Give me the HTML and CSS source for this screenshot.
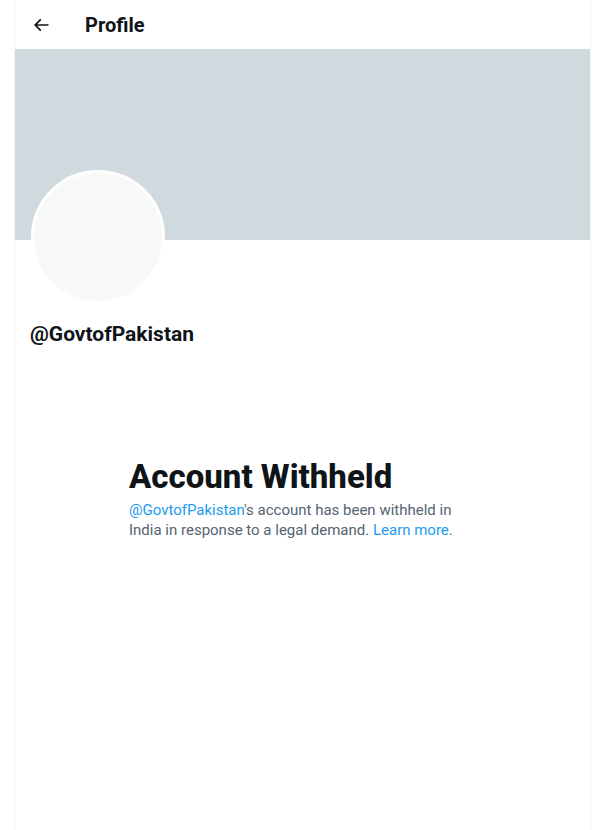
FILE: index.html
```html
<!DOCTYPE html>
<html>
<head>
    <title>Profile</title>
    <link rel="stylesheet" href="styles.css">
</head>
<body>
    <div class="column">
        <div class="topbar">
            <div class="back">
                <svg viewBox="0 0 24 24" width="20" height="20"><path d="M7.414 13l5.043 5.04-1.414 1.42L3.586 12l7.457-7.46 1.414 1.42L7.414 11H21v2H7.414z"></path></svg>
            </div>
            <h2>Profile</h2>
        </div>
        <div class="banner"></div>
        <div class="profile-head">
            <div class="avatar"></div>
        </div>
        <div class="handle">@GovtofPakistan</div>

        <div class="withheld">
            <h1>Account Withheld</h1>
            <p><a href="#">@GovtofPakistan</a>'s account has been withheld in India in response to a legal demand. <a href="#">Learn more</a>.</p>
        </div>
    </div>
</body>
</html>
```
FILE: styles.css
```css
body {
    margin: 0;
    background: #fff;
    font-family: Roboto, "Liberation Sans", sans-serif;
    color: #0f1419;
}
.column {
    margin-left: 14px;
    width: 575px;
    min-height: 830px;
    border-left: 1px solid #eff3f4;
    border-right: 1px solid #eff3f4;
}
.topbar {
    height: 49px;
    display: flex;
    align-items: center;
    padding-left: 16px;
}
.back {
    width: 20px;
    height: 20px;
    margin-right: 34px;
}
.back svg {
    fill: #0f1419;
}
.topbar h2 {
    margin: 0;
    font-size: 20px;
    font-weight: 700;
}
.banner {
    height: 191px;
    background: #cfd9de;
}
.profile-head {
    display: flex;
    height: 64px;
    padding-left: 16px;
}
.avatar {
    width: 128px;
    height: 128px;
    margin-top: -70px;
    border-radius: 50%;
    background: #f7f9f9;
    border: 3px solid #fff;
    flex-shrink: 0;
}
.handle {
    padding-left: 15px;
    margin-top: 18px;
    font-size: 21px;
    font-weight: 700;
    line-height: 24px;
}
.withheld {
    width: 336px;
    margin: 112px 0 0 114px;
}
.withheld h1 {
    margin: 0 0 4px;
    font-size: 33px;
    line-height: 38px;
    font-weight: 800;
}
.withheld p {
    margin: 0;
    font-size: 15px;
    line-height: 20px;
    color: #536471;
}
.withheld a {
    color: #1d9bf0;
    text-decoration: none;
}
```
